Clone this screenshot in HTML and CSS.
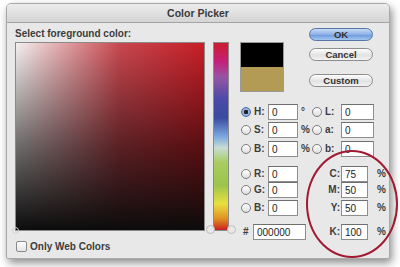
FILE: index.html
```html
<!DOCTYPE html>
<html lang="en">
<head>
    <meta charset="UTF-8">
    <title>Color Picker</title>
    <link rel="stylesheet" href="styles.css">
</head>
<body>

    <!-- Dialog window -->
    <div class="window">
        <div class="titlebar">Color Picker</div>

        <div class="content">
            <!-- Colour field and hue slider -->
            <div class="picker">
                <div class="picker-label">Select foreground color:</div>
                <div class="picker-row">
                    <div class="field-square">
                        <span class="marker"></span>
                    </div>
                    <div class="hue-slider"></div>
                </div>
                <label class="web-only">
                    <span class="checkbox"></span>
                    Only Web Colors
                </label>
            </div>

            <!-- Swatch, buttons and values -->
            <div class="side">
                <div class="side-top">
                    <div class="swatch">
                        <div class="swatch-new"></div>
                        <div class="swatch-old"></div>
                    </div>
                    <div class="buttons">
                        <button class="btn btn-default">OK</button>
                        <button class="btn">Cancel</button>
                        <button class="btn btn-custom">Custom</button>
                    </div>
                </div>

                <div class="values">
                    <span class="radio checked"></span><span class="lbl">H:</span><input class="num" value="0"><span class="unit">°</span>
                    <span class="radio"></span><span class="lbl">L:</span><input class="num wide" value="0"><span class="unit"></span>

                    <span class="radio"></span><span class="lbl">S:</span><input class="num" value="0"><span class="unit">%</span>
                    <span class="radio"></span><span class="lbl">a:</span><input class="num wide" value="0"><span class="unit"></span>

                    <span class="radio"></span><span class="lbl">B:</span><input class="num" value="0"><span class="unit">%</span>
                    <span class="radio"></span><span class="lbl">b:</span><input class="num wide" value="0"><span class="unit"></span>

                    <span class="radio"></span><span class="lbl">R:</span><input class="num" value="0"><span class="unit"></span>
                    <span class="lbl-right">C:</span><input class="num cmyk" value="75"><span class="unit">%</span>

                    <span class="radio"></span><span class="lbl">G:</span><input class="num" value="0"><span class="unit"></span>
                    <span class="lbl-right">M:</span><input class="num cmyk" value="50"><span class="unit">%</span>

                    <span class="radio"></span><span class="lbl">B:</span><input class="num" value="0"><span class="unit"></span>
                    <span class="lbl-right">Y:</span><input class="num cmyk" value="50"><span class="unit">%</span>

                    <span class="hash">#</span><input class="num hex" value="000000">
                    <span class="lbl-right">K:</span><input class="num cmyk" value="100"><span class="unit">%</span>
                </div>
            </div>
        </div>
    </div>

    <!-- Red highlight drawn over the CMYK fields -->
    <div class="highlight"></div>

</body>
</html>
```

FILE: styles.css
```css
/* Global */
* {
    margin: 0;
    padding: 0;
    box-sizing: border-box;
}

body {
    background: #fff;
    font-family: 'Liberation Sans', Arial, sans-serif;
    color: #333;
    width: 400px;
    height: 267px;
    overflow: hidden;
    position: relative;
}

/* Window */
.window {
    margin: 3px 0 0 6px;
    width: 384px;
    height: 256px;
    background: #e8e8e8;
    border: 1px solid #a9a9a9;
    border-radius: 5px 5px 2px 2px;
    box-shadow: 2px 4px 8px rgba(0, 0, 0, 0.45);
}

.titlebar {
    height: 19px;
    background: linear-gradient(#ececec, #d4d4d4);
    border-bottom: 1px solid #a4a4a4;
    border-radius: 4px 4px 0 0;
    text-align: center;
    font-size: 10.5px;
    font-weight: bold;
    line-height: 19px;
    color: #3a3a3a;
}

.content {
    display: flex;
    padding: 5px 0 0 8px;
}

/* Picker */
.picker-label {
    font-size: 10px;
    font-weight: bold;
    line-height: 12px;
    color: #3c3c3c;
    margin-bottom: 2px;
}

.picker-row {
    display: flex;
    gap: 8px;
}

.field-square {
    width: 190px;
    height: 189px;
    position: relative;
    border: 1px solid #8a8a8a;
    background:
        linear-gradient(to bottom, rgba(0, 0, 0, 0) 0%, rgba(0, 0, 0, 0.55) 55%, #0c0c0c 100%),
        linear-gradient(to right, #f4f0f0 0%, #c94850 55%, #c81e26 100%);
}

.marker {
    position: absolute;
    left: -4px;
    bottom: -4px;
    width: 7px;
    height: 7px;
    border: 1px solid #cfcfcf;
    border-radius: 50%;
}

.hue-slider {
    width: 16px;
    height: 189px;
    position: relative;
    border: 1px solid #8a8a8a;
    background: linear-gradient(to bottom,
        #cc1c2c 0%, #c4207a 10%, #9a54a4 18%, #4a4aa8 30%, #3a4aa0 40%,
        #7aa8e0 50%, #c8dcd4 56%, #a8cc60 64%, #9cc44c 76%,
        #e8e040 86%, #e09020 94%, #c82020 100%);
}

.hue-slider::before,
.hue-slider::after {
    content: "";
    position: absolute;
    bottom: -4px;
    width: 7px;
    height: 7px;
    border: 1px solid #bdbdbd;
    border-radius: 50%;
    background: #e8e8e8;
}

.hue-slider::before {
    left: -8px;
}

.hue-slider::after {
    right: -8px;
}

.web-only {
    display: flex;
    align-items: center;
    gap: 3px;
    margin-top: 10px;
    margin-left: 1px;
    font-size: 10px;
    font-weight: bold;
    color: #3c3c3c;
}

.checkbox {
    width: 11px;
    height: 11px;
    border: 1px solid #8a8a8a;
    border-radius: 2px;
    background: linear-gradient(#fff, #e4e4e4);
}

/* Side panel */
.side {
    margin-left: 11px;
    width: 146px;
}

.side-top {
    display: flex;
    justify-content: space-between;
    padding-right: 13px;
}

.swatch {
    margin-top: 14px;
    width: 44px;
    height: 50px;
    border: 1px solid #9a9a9a;
}

.swatch-new {
    height: 24px;
    background: #000;
}

.swatch-old {
    height: 24px;
    background: #b39a55;
}

.buttons {
    display: flex;
    flex-direction: column;
    gap: 7px;
}

.btn {
    width: 64px;
    height: 13px;
    border: 1px solid #8d8d8d;
    border-radius: 7px;
    background: linear-gradient(#fdfdfd, #e2e2e2 55%, #f2f2f2);
    font-family: 'Liberation Sans', Arial, sans-serif;
    font-size: 9.5px;
    font-weight: bold;
    line-height: 11px;
    color: #333;
}

.btn-default {
    background: linear-gradient(#c9dcf6, #8cb0e6 50%, #6e9ae0 55%, #a6c6f0);
    border-color: #5676a8;
}

.btn-custom {
    margin-top: 6px;
}

/* Value fields */
.values {
    margin-top: 11px;
    margin-left: 1px;
    display: grid;
    grid-template-columns: 12px 15px 30px 14px 12px 17px 33px 12px;
    grid-template-rows: 17px 18px 19px 25px 16px 18px 24px;
    align-items: end;
    font-size: 10px;
    font-weight: bold;
    color: #3c3c3c;
}

.values > span {
    height: 16px;
    line-height: 16px;
}

.values > .radio {
    width: 10px;
    height: 10px;
    margin-bottom: 3px;
    border: 1px solid #7c7c7c;
    border-radius: 50%;
    background: linear-gradient(#fff, #dedede);
}

.values > .radio.checked {
    background: radial-gradient(circle, #222 0 2px, #9ab8e6 2.5px, #6c94d4 100%);
    border-color: #4d6ea4;
}

.lbl {
    padding-left: 1px;
}

.lbl-right {
    grid-column: 5 / 7;
    text-align: right;
    padding-right: 1px;
}

.num {
    width: 30px;
    height: 16px;
    border: 1px solid #8e8e8e;
    border-top-color: #6e6e6e;
    background: #fff;
    font-family: 'Liberation Sans', Arial, sans-serif;
    font-size: 10px;
    padding-left: 3px;
    color: #222;
}

.num.wide {
    width: 33px;
}

.num.cmyk {
    width: 27px;
}

.num.hex {
    grid-column: 2 / 5;
    width: 53px;
}

.unit {
    padding-left: 3px;
}

.hash {
    padding-left: 2px;
}

/* Highlight ellipse */
.highlight {
    position: absolute;
    left: 306px;
    top: 150px;
    width: 92px;
    height: 108px;
    border: 2.5px solid #a11a30;
    border-radius: 50%;
}
```
